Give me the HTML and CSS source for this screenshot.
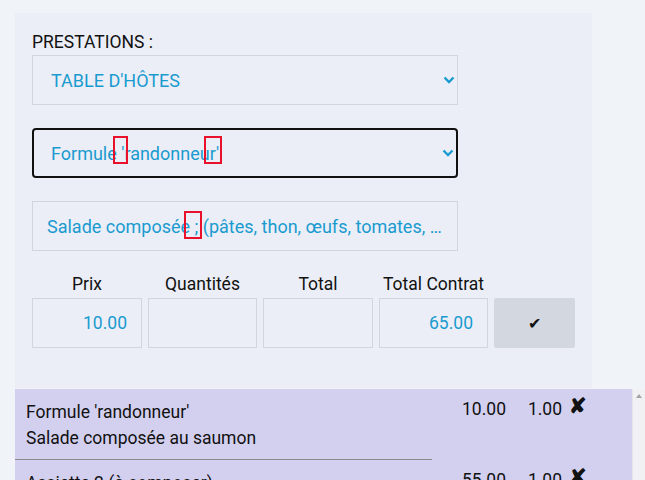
FILE: index.html
```html
<!DOCTYPE html>
<html lang="fr">
<head>
<meta charset="utf-8">
<title>Prestations</title>
<link rel="stylesheet" href="styles.css">
</head>
<body>
<div class="page">
  <section class="panel">
    <div class="label">PRESTATIONS :</div>
    <div class="field select">
      <span class="value">TABLE D'HÔTES</span>
      <svg class="chev" width="12" height="8" viewBox="0 0 12 8"><path d="M1.5 1.5 L6 6 L10.5 1.5" fill="none" stroke="#1a9bd0" stroke-width="2.4"/></svg>
    </div>
    <div class="field select focus">
      <span class="value">Formule<span class="mark m1"> '</span>randonneu<span class="mark m2">r'</span></span>
      <svg class="chev" width="12" height="8" viewBox="0 0 12 8"><path d="M1.5 1.5 L6 6 L10.5 1.5" fill="none" stroke="#1a9bd0" stroke-width="2.4"/></svg>
    </div>
    <div class="field input">
      <span class="value">Salade composée<span class="mark m3"> ;</span> (pâtes, thon, œufs, tomates, …</span>
    </div>
    <div class="grid">
      <div class="head">Prix</div>
      <div class="head">Quantités</div>
      <div class="head">Total</div>
      <div class="head">Total Contrat</div>
      <div class="head"></div>
      <div class="box num">10.00</div>
      <div class="box"></div>
      <div class="box"></div>
      <div class="box num">65.00</div>
      <div class="btn">✔</div>
    </div>
  </section>
  <div class="listwrap">
    <div class="list">
      <div class="item">
        <div class="desc">Formule 'randonneur'<br>Salade composée au saumon</div>
        <div class="price">10.00</div>
        <div class="qty">1.00</div>
        <div class="del">✘</div>
      </div>
      <div class="item">
        <div class="desc">Assiette 2 (à composer)</div>
        <div class="price">55.00</div>
        <div class="qty">1.00</div>
        <div class="del">✘</div>
      </div>
    </div>
    <div class="scrollbar"><span class="arrow"></span></div>
  </div>
</div>
</body>
</html>
```
FILE: styles.css
```css
html, body {
  margin: 0;
  padding: 0;
  background: #f0f3f8;
  font-family: Roboto, "Liberation Sans", sans-serif;
  font-size: 17.5px;
  color: #111;
  overflow: hidden;
}
.page {
  padding-top: 13px;
}
.panel {
  margin-left: 15px;
  width: 577px;
  box-sizing: border-box;
  padding: 19px 17px 40px 17px;
  background: #ebeef6;
  display: flex;
  flex-direction: column;
}
.label {
  line-height: 20px;
  height: 23px;
  color: #111;
}
.field {
  width: 426px;
  height: 50px;
  box-sizing: border-box;
  border: 1px solid #d2d5dd;
  background: #ebeef6;
  display: flex;
  align-items: center;
  color: #1a9bd0;
  font-size: 18px;
  margin-bottom: 23px;
  position: relative;
}
.select {
  padding-left: 18px;
  padding-right: 2px;
}
.select .value {
  flex: 1;
  white-space: pre;
}
.focus {
  border: 2px solid #111;
  border-radius: 4px;
  padding-left: 17px;
  padding-right: 2px;
}
.input {
  padding-left: 14px;
  margin-bottom: 24px;
  white-space: pre;
}
.chev {
  display: block;
}
.mark {
  position: relative;
}
.mark::after {
  content: "";
  position: absolute;
  top: -7px;
  bottom: 0;
  border: 2px solid #e8102a;
}
.m1::after {
  left: -4px;
  right: -4px;
}
.m2::after {
  left: -6px;
  right: -3px;
}
.m3::after {
  left: -6px;
  right: -4px;
  top: -5px;
  bottom: -2px;
}
.grid {
  display: grid;
  grid-template-columns: 110px 109px 110px 109px 81px;
  column-gap: 6px;
}
.head {
  text-align: center;
  line-height: 19px;
  height: 23px;
  color: #111;
}
.box {
  height: 50px;
  box-sizing: border-box;
  border: 1px solid #d2d5dd;
  color: #1a9bd0;
  display: flex;
  align-items: center;
  justify-content: flex-end;
  padding-right: 14px;
}
.btn {
  height: 50px;
  background: #d3d8e0;
  border-radius: 2px;
  display: flex;
  align-items: center;
  justify-content: center;
  font-size: 16px;
  color: #111;
}
.listwrap {
  margin-top: 1px;
  display: flex;
}
.list {
  margin-left: 15px;
  width: 618px;
  background: #d3d0ef;
  height: 200px;
}
.scrollbar {
  width: 12px;
  background: #f1f1f3;
  border-left: 1px solid #e6e6ea;
  position: relative;
}
.arrow {
  position: absolute;
  left: 3px;
  top: 5px;
  width: 0;
  height: 0;
  border-left: 3px solid transparent;
  border-right: 3px solid transparent;
  border-bottom: 4px solid #a3a3a3;
}
.item {
  display: flex;
  align-items: flex-start;
}
.desc {
  width: 417px;
  box-sizing: border-box;
  padding: 10px 11px 8px 11px;
  line-height: 26px;
  border-bottom: 1px solid #8a8a8a;
}
.price {
  width: 74px;
  text-align: right;
  padding-top: 10px;
  line-height: 20px;
}
.qty {
  width: 56px;
  text-align: right;
  padding-top: 10px;
  line-height: 20px;
}
.del {
  padding-left: 7px;
  padding-top: 7px;
  font-size: 21px;
  font-weight: bold;
  line-height: 20px;
}
```
